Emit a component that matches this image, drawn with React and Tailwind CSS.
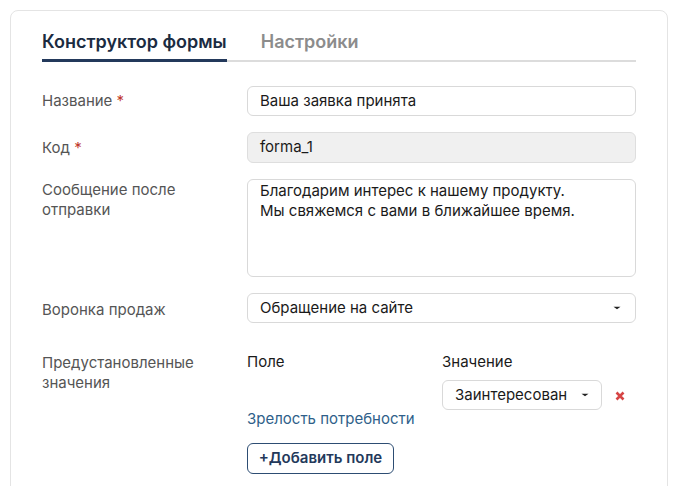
import React from "react";

function Caret() {
  return (
    <svg width="8" height="4" viewBox="0 0 8 4" className="shrink-0">
      <path d="M0.5 0.8h7L4 3.2z" fill="#222" />
    </svg>
  );
}

function Label({ children, required }) {
  return (
    <div className="w-[205px] shrink-0 text-[15px] leading-5 text-[#555]">
      {children}
      {required && <span className="text-[#c0392b]"> *</span>}
    </div>
  );
}

export default function App() {
  return (
    <div className="h-[486px] w-[674px] overflow-hidden bg-white pt-[10px] pl-[10px] pr-[6px]" style={{ fontFamily: "Inter, 'Noto Sans', sans-serif" }}>
      <div className="h-[500px] rounded-lg border border-[#e4e4e4] px-[31px] pt-[17px]">
        <div className="flex border-b-2 border-[#dcdcdc]">
          <div className="-mb-[2px] border-b-[3px] border-[#23395b] pb-[4px] text-[18px] font-semibold text-[#1b2b41]">
            Конструктор формы
          </div>
          <div className="ml-[34px] pb-[4px] text-[18px] font-semibold text-[#8c8c8c]">Настройки</div>
        </div>

        <div className="mt-[24px] flex flex-col gap-4">
          <div className="flex items-center">
            <Label required>Название</Label>
            <div className="flex h-[30px] flex-1 items-center rounded-md border border-[#d9d9d9] px-3 text-[15px] text-[#1a1a1a]">
              Ваша заявка принята
            </div>
          </div>

          <div className="flex items-center">
            <Label required>Код</Label>
            <div className="flex h-[31px] flex-1 items-center rounded-md border border-[#dedede] bg-[#f0f0f0] px-3 text-[15px] text-[#1a1a1a]">
              forma_1
            </div>
          </div>

          <div className="flex items-start">
            <div className="pt-[1px]">
              <Label>
                Сообщение после
                <br />
                отправки
              </Label>
            </div>
            <div className="h-[98px] flex-1 rounded-md border border-[#d9d9d9] px-3 pt-[1px] text-[15px] leading-5 text-[#1a1a1a]">
              Благодарим интерес к нашему продукту.
              <br />
              Мы свяжемся с вами в ближайшее время.
            </div>
          </div>

          <div className="flex items-center">
            <div className="pt-[4px]">
              <Label>Воронка продаж</Label>
            </div>
            <div className="flex h-[30px] flex-1 items-center justify-between rounded-md border border-[#d9d9d9] pl-3 pr-[14px] text-[15px] text-[#1a1a1a]">
              Обращение на сайте
              <Caret />
            </div>
          </div>

          <div className="mt-[13px] flex items-start">
            <div className="pt-[1px]">
              <Label>
                Предустановленные
                <br />
                значения
              </Label>
            </div>
            <div className="flex-1">
              <div className="flex text-[15px] leading-5 text-[#1a1a1a]">
                <div className="w-[195px]">Поле</div>
                <div>Значение</div>
              </div>
              <div className="mt-[8px] flex items-center pl-[195px]">
                <div className="flex h-[30px] w-[160px] items-center justify-between rounded-md border border-[#d9d9d9] pl-3 pr-[12px] text-[15px] text-[#1a1a1a]">
                  Заинтересован
                  <Caret />
                </div>
                <svg width="10" height="10" viewBox="0 0 10 10" className="ml-[13px] mt-[2px]">
                  <path d="M1.5 1.5l7 7M8.5 1.5l-7 7" stroke="#d64545" strokeWidth="2.6" />
                </svg>
              </div>
              <div className="mt-[-1px] text-[15px] leading-5 text-[#2f5f8a]">Зрелость потребности</div>
              <button className="mt-[14px] flex h-[31px] w-[147px] items-center justify-center rounded-md border-[1.5px] border-[#2d4d73] text-[15px] font-semibold text-[#23395b]">
                +Добавить поле
              </button>
            </div>
          </div>
        </div>
      </div>
    </div>
  );
}
